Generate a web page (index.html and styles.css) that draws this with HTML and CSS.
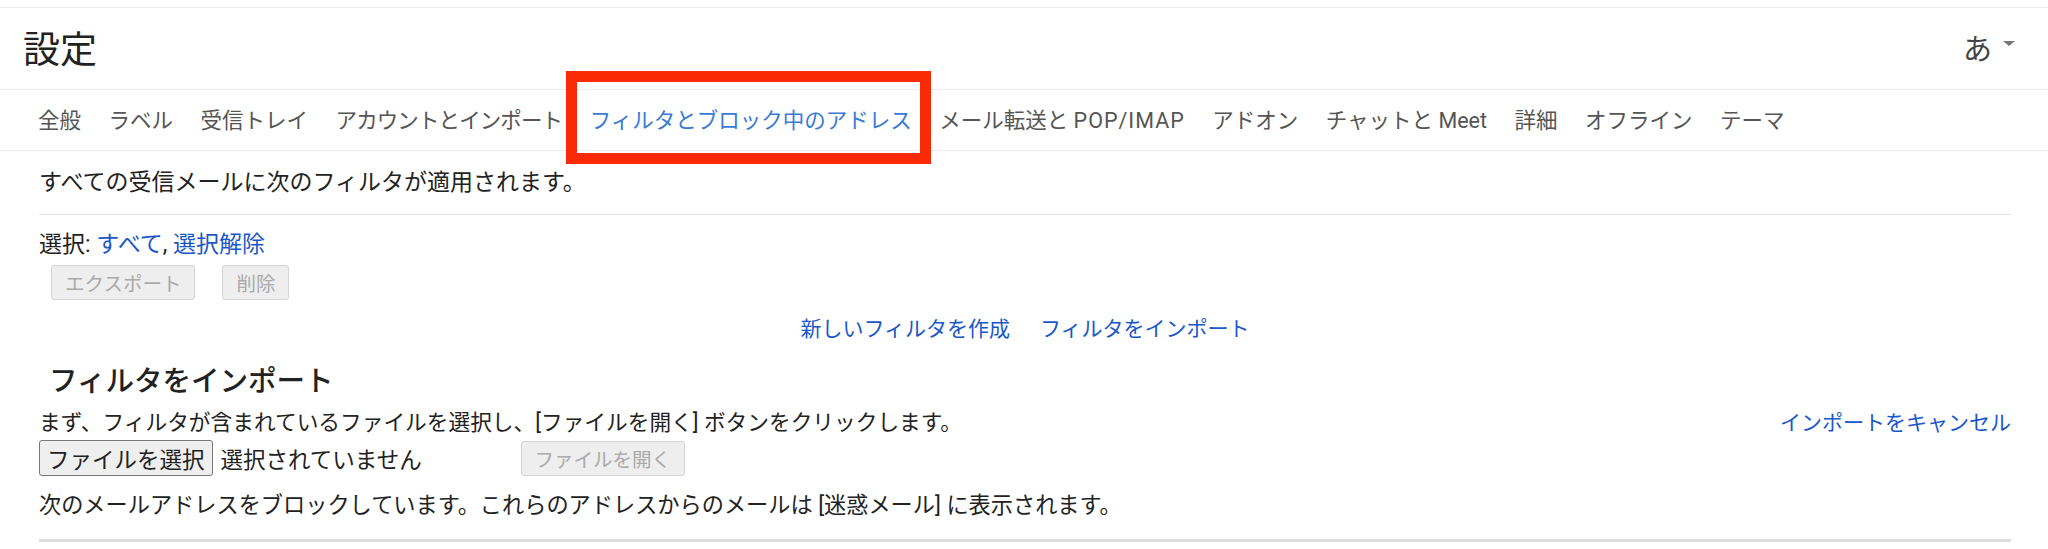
FILE: index.html
```html
<!DOCTYPE html>
<html lang="ja">
<head>
    <meta charset="UTF-8">
    <title>設定</title>
    <link rel="stylesheet" href="styles.css">
</head>
<body>
    <div class="top-strip"></div>

    <div class="title-row">
        <h1>設定</h1>
        <div class="input-tool">
            <span>あ</span>
            <span class="caret"></span>
        </div>
    </div>

    <nav class="tabs">
        <a class="tab">全般</a>
        <a class="tab">ラベル</a>
        <a class="tab">受信トレイ</a>
        <a class="tab tight">アカウントとインポート</a>
        <a class="tab active">フィルタとブロック中のアドレス<span class="highlight"></span></a>
        <a class="tab">メール転送と <span class="wide">POP/IMAP</span></a>
        <a class="tab">アドオン</a>
        <a class="tab">チャットと Meet</a>
        <a class="tab">詳細</a>
        <a class="tab">オフライン</a>
        <a class="tab">テーマ</a>
    </nav>

    <div class="content">
        <div class="intro">すべての受信メールに次のフィルタが適用されます。</div>

        <div class="select-row">
            選択: <a class="link">すべて</a>, <a class="link">選択解除</a>
        </div>
        <div class="action-row">
            <button class="btn" disabled>エクスポート</button>
            <button class="btn" disabled>削除</button>
        </div>

        <div class="filter-links">
            <a class="link">新しいフィルタを作成</a>
            <a class="link">フィルタをインポート</a>
        </div>

        <h2>フィルタをインポート</h2>
        <div class="import-row">
            <span>まず、フィルタが含まれているファイルを選択し、[ファイルを開く] ボタンをクリックします。</span>
            <a class="link">インポートをキャンセル</a>
        </div>
        <div class="file-row">
            <button class="file-btn">ファイルを選択</button>
            <span class="file-name">選択されていません</span>
            <button class="btn" disabled>ファイルを開く</button>
        </div>

        <div class="blocked">次のメールアドレスをブロックしています。これらのアドレスからのメールは [迷惑メール] に表示されます。</div>
        <div class="bottom-rule"></div>
    </div>
</body>
</html>
```

FILE: styles.css
```css
* {
    margin: 0;
    padding: 0;
    box-sizing: border-box;
}

body {
    font-family: Roboto, "Noto Sans CJK JP", sans-serif;
    background: #fff;
    color: #222;
    font-size: 22px;
}

.top-strip {
    height: 8px;
    border-bottom: 1px solid #ececec;
}

.title-row {
    height: 81px;
    display: flex;
    align-items: center;
    justify-content: space-between;
    padding: 0 33px 4px 23px;
}

h1 {
    font-size: 37px;
    font-weight: 400;
    color: #222;
}

.input-tool {
    display: flex;
    align-items: center;
    gap: 11px;
    font-size: 29px;
    color: #444;
}

.caret {
    width: 0;
    height: 0;
    border-left: 6px solid transparent;
    border-right: 6px solid transparent;
    border-top: 5px solid #777;
    margin-top: -6px;
}

.tabs {
    height: 62px;
    border-top: 1px solid #ececec;
    border-bottom: 1px solid #ececec;
    display: flex;
    align-items: center;
    gap: 27.5px;
    padding: 0 0 4px 38px;
    font-size: 21.5px;
}

.tab {
    color: #555;
    position: relative;
    white-space: nowrap;
}

.tab.tight {
    letter-spacing: -0.9px;
}

.tab .wide {
    letter-spacing: 1px;
}

.tab.active {
    color: #3a7ad6;
}

/* red annotation box around the active tab */
.highlight {
    position: absolute;
    left: -24px;
    right: -19px;
    top: -32px;
    bottom: -30px;
    border: 11px solid #fb2a06;
}

.content {
    padding: 0 37px 0 39px;
}

.intro {
    height: 64px;
    line-height: 64px;
    font-size: 23px;
    border-bottom: 1px solid #e2e2e2;
}

.link {
    color: #1a57c9;
    cursor: pointer;
}

.select-row {
    margin-top: 10px;
    font-size: 23px;
}

.action-row {
    display: flex;
    gap: 27px;
    margin-top: 6px;
    padding-left: 12px;
}

.btn {
    font-family: inherit;
    font-size: 19.5px;
    height: 35px;
    padding: 0 13px;
    color: #aaa;
    background: #eee;
    border: 1px solid #d4d4d4;
    border-radius: 3px;
}

.filter-links {
    display: flex;
    justify-content: center;
    gap: 30px;
    margin-top: 12px;
    font-size: 21px;
}

h2 {
    font-size: 28.5px;
    font-weight: 500;
    color: #222;
    margin: 16px 0 0 10px;
}

.import-row {
    display: flex;
    justify-content: space-between;
    align-items: baseline;
    margin-top: 6px;
    font-size: 21.7px;
}

.import-row .link {
    font-size: 21px;
}

.file-row {
    display: flex;
    align-items: center;
    margin-top: 4px;
}

.file-btn {
    font-family: inherit;
    font-size: 22.5px;
    height: 36px;
    padding: 0 7px;
    color: #222;
    background: #efefef;
    border: 1px solid #777;
    border-radius: 3px;
}

.file-name {
    margin-left: 8px;
    width: 300px;
    font-size: 22.5px;
}

.blocked {
    margin-top: 11px;
    font-size: 22.2px;
}

.bottom-rule {
    margin-top: 20px;
    border-top: 3px solid #ddd;
}
```
